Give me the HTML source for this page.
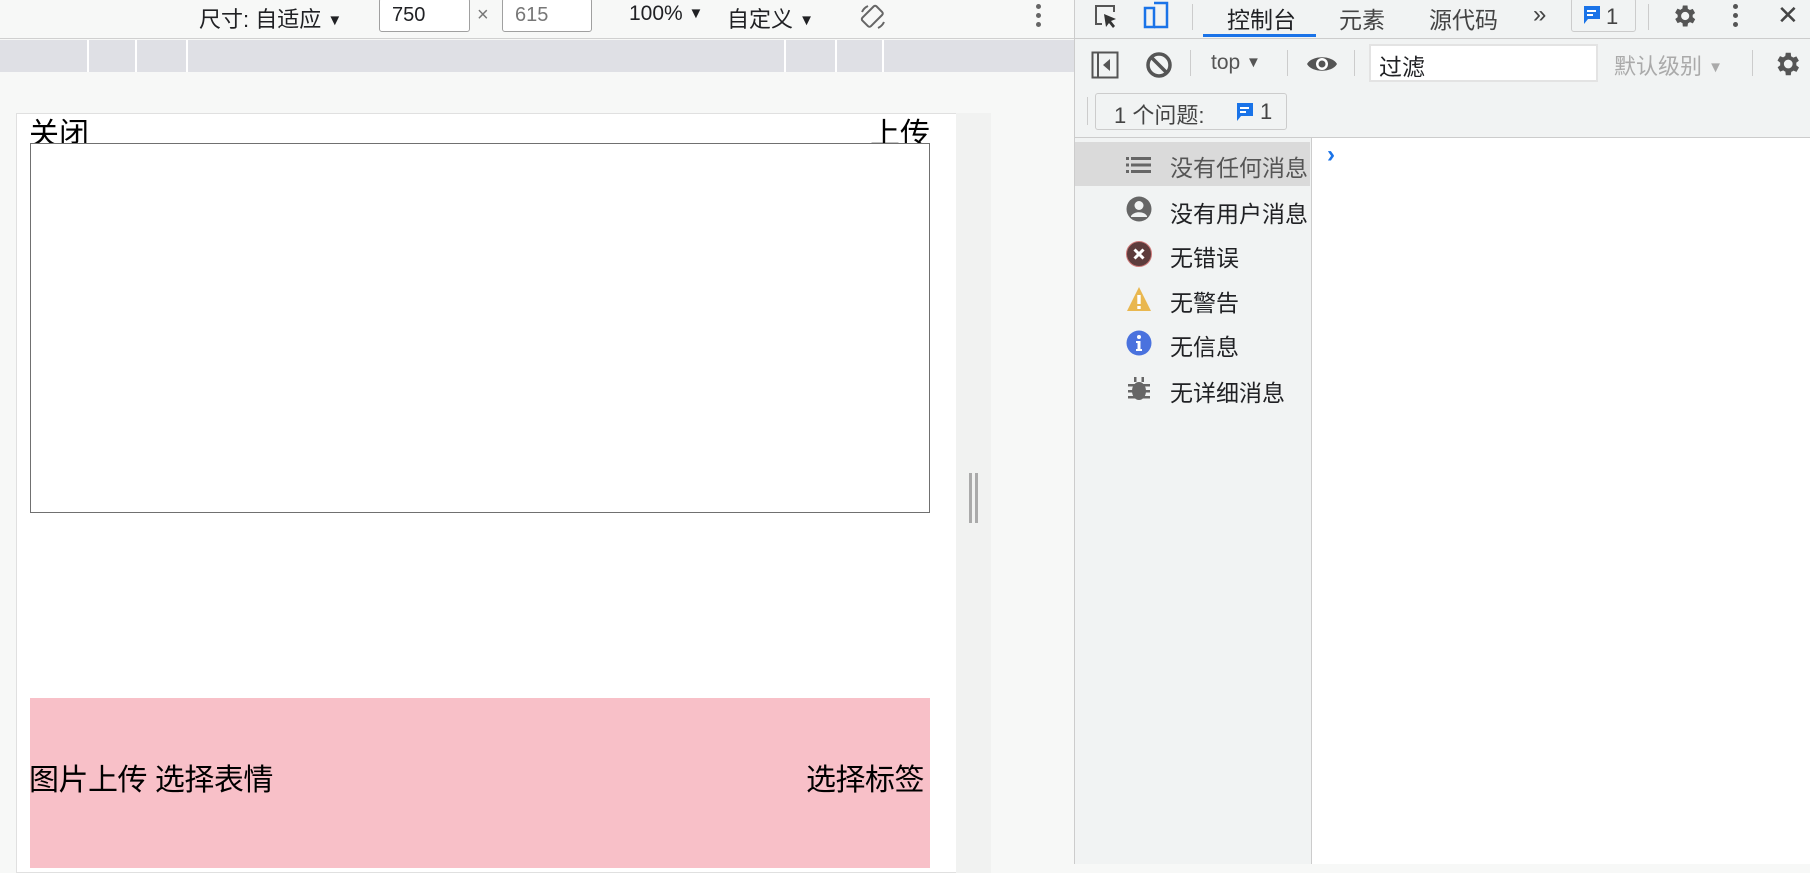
<!DOCTYPE html>
<html><head><meta charset="utf-8"><style>
*{margin:0;padding:0;box-sizing:border-box}
body{width:1810px;height:864px;overflow:hidden;position:relative;background:#f7f8f7;font-family:"Liberation Sans","Noto Sans CJK SC",sans-serif;color:#202124}
.a{position:absolute;white-space:nowrap}
.t{font-size:15px;vertical-align:2px}
</style></head><body>
<div class="a" style="left:0;top:0;width:1074px;height:39px;background:#f7f8f7;border-bottom:1px solid #d0d0d0"></div>
<div class="a" style="left:199px;top:2px;font-size:22px;color:#202124">尺寸: 自适应 <span class="t">▼</span></div>
<div class="a" style="left:379px;top:-2px;width:91px;height:34px;border:1px solid #a0a0a0;border-radius:3px;background:#fff;font-size:20px;padding:5px 12px">750</div>
<div class="a" style="left:477px;top:4px;font-size:20px;color:#777">×</div>
<div class="a" style="left:502px;top:-2px;width:90px;height:34px;border:1px solid #a0a0a0;border-radius:3px;background:#fff;font-size:20px;padding:5px 12px;color:#777">615</div>
<div class="a" style="left:629px;top:2px;font-size:21px">100% <span class="t">▼</span></div>
<div class="a" style="left:727px;top:2px;font-size:22px">自定义 <span class="t">▼</span></div>
<svg class="a" style="left:858px;top:2px" width="30" height="30" viewBox="0 0 30 30"><rect x="8" y="5" width="12" height="20" rx="2" transform="rotate(45 15 15)" fill="none" stroke="#666" stroke-width="2"/><path d="M4 10a12 12 0 016-6M26 20a12 12 0 01-6 6" fill="none" stroke="#666" stroke-width="2"/></svg>
<div class="a" style="left:1036px;top:4px;width:5px;height:5px;border-radius:50%;background:#666;box-shadow:0 9px 0 #666,0 18px 0 #666"></div>
<div class="a" style="left:0;top:40px;width:1074px;height:32px;background:#dfe0e5"></div>
<div class="a" style="left:87px;top:40px;width:2px;height:32px;background:#fff"></div>
<div class="a" style="left:135px;top:40px;width:2px;height:32px;background:#fff"></div>
<div class="a" style="left:186px;top:40px;width:2px;height:32px;background:#fff"></div>
<div class="a" style="left:784px;top:40px;width:2px;height:32px;background:#fff"></div>
<div class="a" style="left:835px;top:40px;width:2px;height:32px;background:#fff"></div>
<div class="a" style="left:882px;top:40px;width:2px;height:32px;background:#fff"></div>
<div class="a" style="left:16px;top:113px;width:940px;height:760px;background:#fff;border:1px solid #e0e0e0;border-right:none"></div>
<div class="a" style="left:956px;top:113px;width:35px;height:760px;background:#f1f2f1"></div>
<div class="a" style="left:969px;top:473px;width:3px;height:50px;background:#aaa"></div>
<div class="a" style="left:975px;top:473px;width:3px;height:50px;background:#aaa"></div>
<div class="a" style="left:29px;top:109px;font-size:30px;color:#000">关闭</div>
<div class="a" style="left:870px;top:109px;font-size:30px;color:#000">上传</div>
<div class="a" style="left:30px;top:143px;width:900px;height:370px;border:1px solid #707070;background:#fff"></div>
<div class="a" style="left:30px;top:698px;width:900px;height:170px;background:#f8c0c8"></div>
<div class="a" style="left:29px;top:755px;font-size:30px;color:#000;letter-spacing:-0.5px">图片上传 选择表情</div>
<div class="a" style="left:806px;top:755px;font-size:30px;color:#000;letter-spacing:-0.5px">选择标签</div>
<div class="a" style="left:1074px;top:0;width:736px;height:864px;background:#f1f3f3;border-left:1px solid #ccc"></div>
<svg class="a" style="left:1092px;top:2px" width="28" height="30" viewBox="0 0 28 30"><path d="M10 22H4V4h18v6" fill="none" stroke="#555" stroke-width="2"/><path d="M12 12l12 5-5 2 4 5-2 2-4-5-3 4z" fill="#333"/></svg>
<svg class="a" style="left:1142px;top:0" width="30" height="30" viewBox="0 0 30 30"><rect x="3" y="8" width="9" height="19" fill="none" stroke="#1a73e8" stroke-width="2.5"/><path d="M12 3h13v24H12" fill="none" stroke="#1a73e8" stroke-width="2.5"/></svg>
<div class="a" style="left:1192px;top:4px;width:1px;height:26px;background:#ccc"></div>
<div class="a" style="left:1227px;top:1px;font-size:23px;color:#202124">控制台</div>
<div class="a" style="left:1203px;top:34px;width:113px;height:3px;background:#1a73e8"></div>
<div class="a" style="left:1339px;top:1px;font-size:23px;color:#444">元素</div>
<div class="a" style="left:1429px;top:1px;font-size:23px;color:#444">源代码</div>
<div class="a" style="left:1533px;top:1px;font-size:24px;color:#444">»</div>
<div class="a" style="left:1571px;top:-2px;width:65px;height:34px;border:1px solid #ccc;border-radius:3px"></div>
<svg class="a" style="left:1582px;top:4px" width="20" height="22" viewBox="0 0 20 22"><path d="M2 2h16v13H6l-4 5z" fill="#1a73e8"/><rect x="5" y="6" width="9" height="2" fill="#fff"/><rect x="5" y="10" width="6" height="2" fill="#fff"/></svg>
<div class="a" style="left:1606px;top:4px;font-size:22px;color:#444">1</div>
<div class="a" style="left:1648px;top:4px;width:1px;height:26px;background:#ccc"></div>
<svg class="a" style="left:1670px;top:2px" width="28" height="28" viewBox="0 0 24 24"><path fill="#555" d="M19.4 13a7.5 7.5 0 000-2l2.1-1.6-2-3.5-2.5 1a7 7 0 00-1.7-1L15 3h-4l-.4 2.7a7 7 0 00-1.7 1l-2.5-1-2 3.5L6.6 11a7.5 7.5 0 000 2l-2.1 1.6 2 3.5 2.5-1a7 7 0 001.7 1L11 21h4l.4-2.7a7 7 0 001.7-1l2.5 1 2-3.5zM13 15.5a3.5 3.5 0 110-7 3.5 3.5 0 010 7z"/></svg>
<div class="a" style="left:1733px;top:4px;width:5px;height:5px;border-radius:50%;background:#555;box-shadow:0 9px 0 #555,0 18px 0 #555"></div>
<div class="a" style="left:1777px;top:0px;font-size:26px;color:#444">✕</div>
<div class="a" style="left:1074px;top:38px;width:736px;height:1px;background:#ccc"></div>
<svg class="a" style="left:1091px;top:51px" width="28" height="28" viewBox="0 0 28 28"><rect x="1.5" y="1.5" width="25" height="25" fill="none" stroke="#555" stroke-width="2"/><rect x="6" y="2" width="2" height="24" fill="#555"/><path d="M19 8v12l-7-6z" fill="#555"/></svg>
<svg class="a" style="left:1145px;top:51px" width="28" height="28" viewBox="0 0 28 28"><circle cx="14" cy="14" r="11" fill="none" stroke="#555" stroke-width="3.5"/><path d="M6 6l16 16" stroke="#555" stroke-width="3.5"/></svg>
<div class="a" style="left:1190px;top:50px;width:1px;height:26px;background:#ccc"></div>
<div class="a" style="left:1211px;top:51px;font-size:21px;color:#555">top <span class="t">▼</span></div>
<div class="a" style="left:1287px;top:50px;width:1px;height:26px;background:#ccc"></div>
<svg class="a" style="left:1306px;top:52px" width="32" height="24" viewBox="0 0 32 24"><path d="M1 12C6 3 26 3 31 12 26 21 6 21 1 12z" fill="#555"/><circle cx="16" cy="12" r="6" fill="#fff"/><circle cx="16" cy="12" r="3.5" fill="#555"/></svg>
<div class="a" style="left:1354px;top:50px;width:1px;height:26px;background:#ccc"></div>
<div class="a" style="left:1369px;top:44px;width:229px;height:38px;background:#fff;border:2px solid #e3e3e3;font-size:23px;padding:2px 8px;color:#202124">过滤</div>
<div class="a" style="left:1614px;top:49px;font-size:22px;color:#aaa">默认级别 <span class="t">▼</span></div>
<div class="a" style="left:1752px;top:50px;width:1px;height:26px;background:#ccc"></div>
<svg class="a" style="left:1772px;top:49px" width="30" height="30" viewBox="0 0 24 24"><path fill="#555" d="M19.4 13a7.5 7.5 0 000-2l2.1-1.6-2-3.5-2.5 1a7 7 0 00-1.7-1L15 3h-4l-.4 2.7a7 7 0 00-1.7 1l-2.5-1-2 3.5L6.6 11a7.5 7.5 0 000 2l-2.1 1.6 2 3.5 2.5-1a7 7 0 001.7 1L11 21h4l.4-2.7a7 7 0 001.7-1l2.5 1 2-3.5zM13 15.5a3.5 3.5 0 110-7 3.5 3.5 0 010 7z"/></svg>
<div class="a" style="left:1087px;top:97px;width:1px;height:28px;background:#ccc"></div>
<div class="a" style="left:1095px;top:93px;width:192px;height:37px;border:1px solid #ccc;border-radius:3px"></div>
<div class="a" style="left:1114px;top:98px;font-size:22px;color:#444">1 个问题:</div>
<svg class="a" style="left:1235px;top:101px" width="20" height="22" viewBox="0 0 20 22"><path d="M2 2h16v13H6l-4 5z" fill="#1a73e8"/><rect x="5" y="6" width="9" height="2" fill="#fff"/><rect x="5" y="10" width="6" height="2" fill="#fff"/></svg>
<div class="a" style="left:1260px;top:99px;font-size:22px;color:#444">1</div>
<div class="a" style="left:1074px;top:137px;width:736px;height:1px;background:#ccc"></div>
<div class="a" style="left:1311px;top:138px;width:499px;height:726px;background:#fff;border-left:1px solid #ccc"></div>
<div class="a" style="left:1327px;top:141px;font-size:24px;color:#1a73e8;font-weight:bold">›</div>
<div class="a" style="left:1075px;top:142px;width:235px;height:44px;background:#dadada"></div>
<svg class="a" style="left:1126px;top:155px" width="26" height="20" viewBox="0 0 26 20"><g fill="#666"><rect x="0" y="2" width="3" height="3"/><rect x="5" y="2" width="20" height="3"/><rect x="0" y="8.5" width="3" height="3"/><rect x="5" y="8.5" width="20" height="3"/><rect x="0" y="15" width="3" height="3"/><rect x="5" y="15" width="20" height="3"/></g></svg>
<svg class="a" style="left:1126px;top:196px" width="26" height="26" viewBox="0 0 26 26"><circle cx="13" cy="13" r="12.5" fill="#666"/><circle cx="13" cy="9.5" r="4.5" fill="#f1f3f3"/><path d="M5 20c3-5 13-5 16 0v1H5z" fill="#f1f3f3"/></svg>
<svg class="a" style="left:1126px;top:241px" width="26" height="26" viewBox="0 0 26 26"><circle cx="13" cy="13" r="12.5" fill="#5d3c3c" stroke="#c77" stroke-width="1"/><path d="M8.5 8.5l9 9M17.5 8.5l-9 9" stroke="#fff" stroke-width="3"/></svg>
<svg class="a" style="left:1126px;top:286px" width="26" height="26" viewBox="0 0 26 26"><path d="M13 1L25 25H1z" fill="#e9b74f"/><rect x="11.3" y="9" width="3.4" height="9" fill="#fff"/><rect x="11.3" y="20" width="3.4" height="3" fill="#fff"/></svg>
<svg class="a" style="left:1126px;top:330px" width="26" height="26" viewBox="0 0 26 26"><circle cx="13" cy="13" r="12.5" fill="#4a72de"/><circle cx="13" cy="7" r="2" fill="#fff"/><path d="M10 11h4.5v8H16v2h-6v-2h1.5v-6H10z" fill="#fff"/></svg>
<svg class="a" style="left:1126px;top:376px" width="26" height="26" viewBox="0 0 26 26"><g fill="#666"><ellipse cx="13" cy="15" rx="7" ry="9"/><rect x="2" y="8" width="22" height="2.5"/><rect x="2" y="14" width="22" height="2.5"/><rect x="2" y="20" width="22" height="2.5"/><rect x="8" y="1" width="2.5" height="5"/><rect x="15.5" y="1" width="2.5" height="5"/></g></svg>
<div class="a" style="left:1170px;top:149px;font-size:23px;color:#555">没有任何消息</div>
<div class="a" style="left:1170px;top:195px;font-size:23px;color:#202124">没有用户消息</div>
<div class="a" style="left:1170px;top:239px;font-size:23px;color:#202124">无错误</div>
<div class="a" style="left:1170px;top:284px;font-size:23px;color:#202124">无警告</div>
<div class="a" style="left:1170px;top:328px;font-size:23px;color:#202124">无信息</div>
<div class="a" style="left:1170px;top:374px;font-size:23px;color:#202124">无详细消息</div>
</body></html>
